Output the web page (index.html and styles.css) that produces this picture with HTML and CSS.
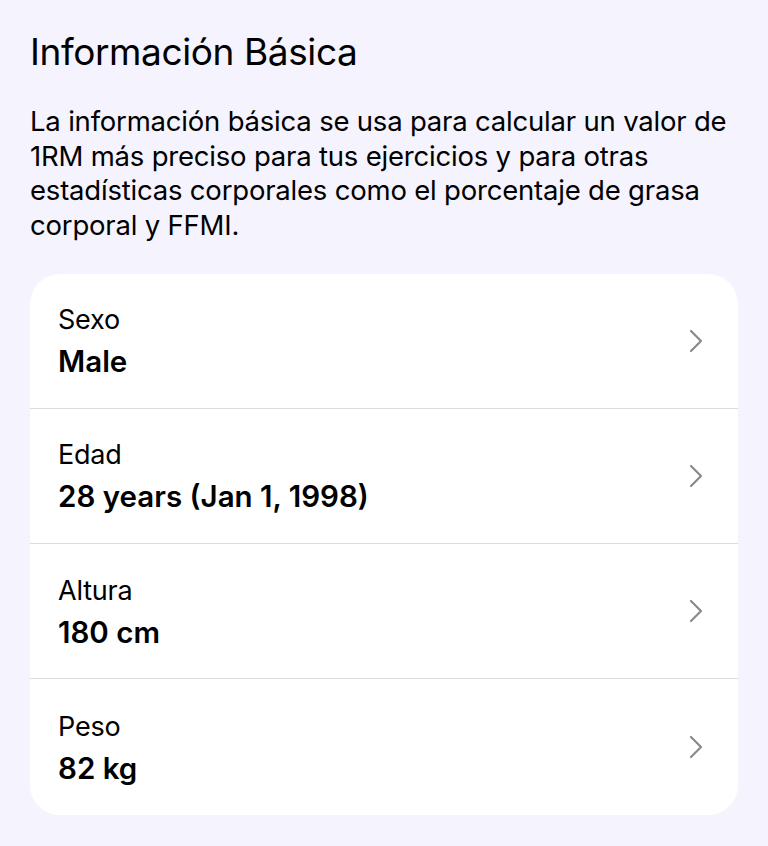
FILE: index.html
```html
<!DOCTYPE html>
<html lang="es">

<head>
    <meta charset="UTF-8">
    <meta name="viewport" content="width=device-width, initial-scale=1.0">
    <title>Información Básica</title>
    <link rel="stylesheet" href="styles.css">
</head>

<body>
    <div class="page">
        <h1 class="title">Información Básica</h1>
        <p class="intro">La información básica se usa para calcular un valor de 1RM más preciso para tus ejercicios y para otras estadísticas corporales como el porcentaje de grasa corporal y FFMI.</p>

        <div class="card">
            <div class="row">
                <div class="info">
                    <p class="label">Sexo</p>
                    <p class="value">Male</p>
                </div>
                <svg class="chevron" viewBox="0 0 16 24" width="16" height="24">
                    <path d="M3 2 L13 12 L3 22" />
                </svg>
            </div>
            <div class="row">
                <div class="info">
                    <p class="label">Edad</p>
                    <p class="value">28 years (Jan 1, 1998)</p>
                </div>
                <svg class="chevron" viewBox="0 0 16 24" width="16" height="24">
                    <path d="M3 2 L13 12 L3 22" />
                </svg>
            </div>
            <div class="row">
                <div class="info">
                    <p class="label">Altura</p>
                    <p class="value">180 cm</p>
                </div>
                <svg class="chevron" viewBox="0 0 16 24" width="16" height="24">
                    <path d="M3 2 L13 12 L3 22" />
                </svg>
            </div>
            <div class="row">
                <div class="info">
                    <p class="label">Peso</p>
                    <p class="value">82 kg</p>
                </div>
                <svg class="chevron" viewBox="0 0 16 24" width="16" height="24">
                    <path d="M3 2 L13 12 L3 22" />
                </svg>
            </div>
        </div>
    </div>
</body>

</html>
```

FILE: styles.css
```css
* {
    margin: 0;
    padding: 0;
    box-sizing: border-box;
}

body {
    background-color: #f5f3fd;
    color: #000000;
    font-family: Inter, "Noto Sans", sans-serif;
}

.page {
    padding: 30px 30px 0 30px;
}

.title {
    font-size: 37px;
    font-weight: 400;
    letter-spacing: -0.4px;
    line-height: 44px;
}

.intro {
    margin-top: 30px;
    font-size: 27.5px;
    line-height: 34.5px;
    letter-spacing: -0.2px;
}

.card {
    margin-top: 31.5px;
    background-color: #ffffff;
    border-radius: 30px;
    overflow: hidden;
}

.row {
    height: 135.3px;
    display: flex;
    align-items: center;
    justify-content: space-between;
    padding: 0 34px 0 28px;
    border-bottom: 1px solid #dcdcdf;
}

.row:last-child {
    border-bottom: none;
}

.label {
    font-size: 27px;
    line-height: 34px;
    letter-spacing: -0.2px;
}

.value {
    margin-top: 7px;
    font-size: 29.5px;
    font-weight: 600;
    line-height: 34px;
    letter-spacing: 0;
}

.chevron {
    fill: none;
    stroke: #8a8a8e;
    stroke-width: 2.2;
    stroke-linecap: round;
    stroke-linejoin: round;
}
```
